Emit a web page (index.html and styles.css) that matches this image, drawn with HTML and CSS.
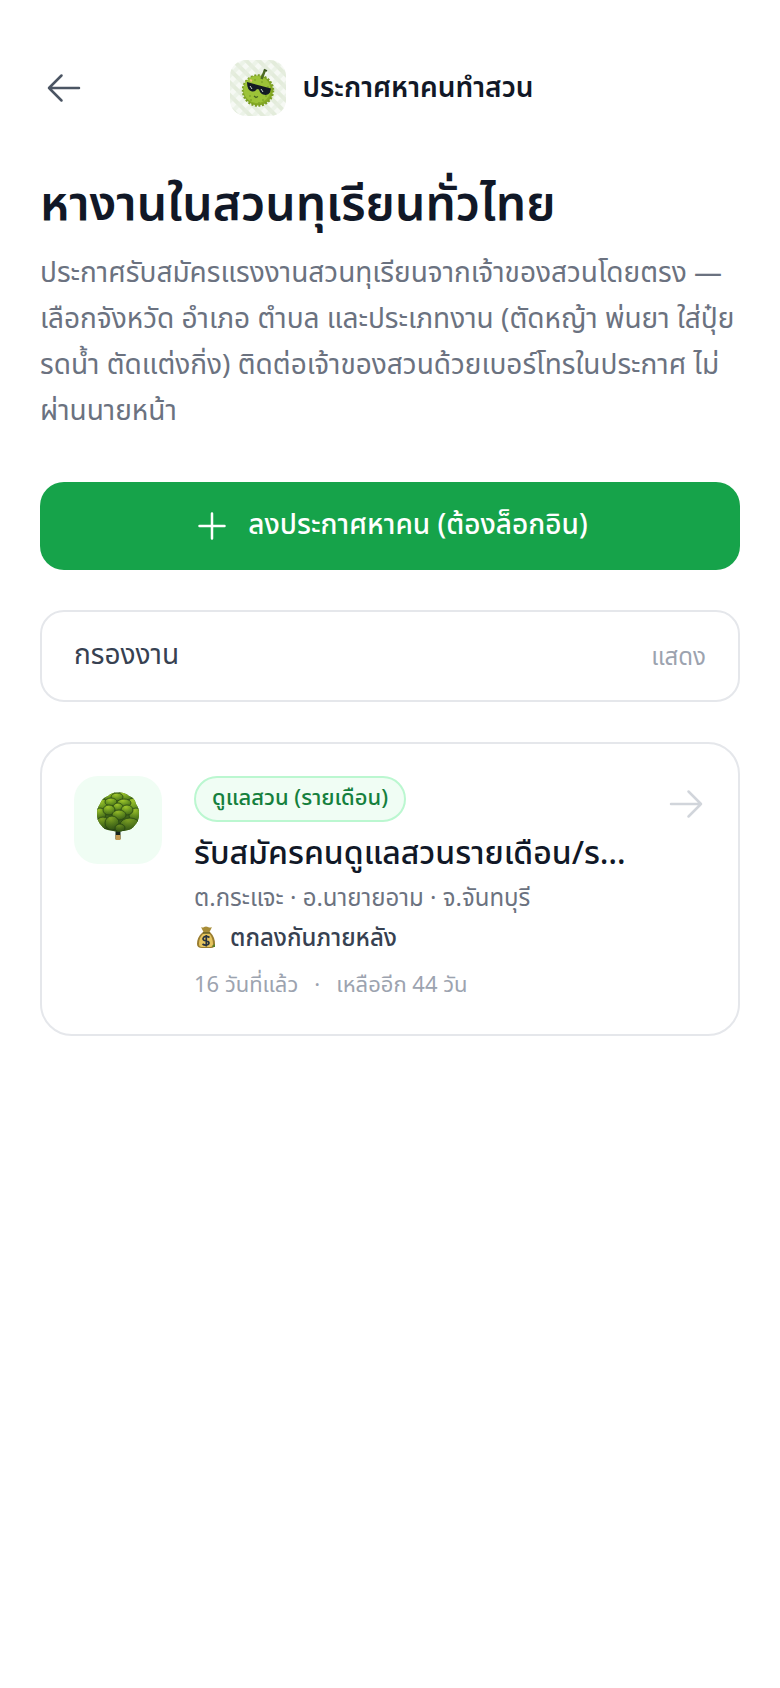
FILE: index.html
```html
<!DOCTYPE html>
<html lang="th">
<head>
<meta charset="utf-8">
<meta name="viewport" content="width=device-width, initial-scale=1">
<title>ประกาศหาคนทำสวน</title>
<link rel="stylesheet" href="styles.css">
</head>
<body>
<header class="topbar">
  <a class="back" href="#" aria-label="ย้อนกลับ">
    <svg class="icon" viewBox="0 0 24 24"><path d="M10.5 19.5 3 12m0 0 7.5-7.5M3 12h18"/></svg>
  </a>
  <div class="brand">
    <svg class="logo" viewBox="0 0 56 56" aria-hidden="true">
      <defs>
        <pattern id="plaid" width="9" height="9" patternUnits="userSpaceOnUse" patternTransform="rotate(-45)">
          <rect width="9" height="9" fill="#f6f9f4"/>
          <rect width="4" height="9" fill="#dce7d0" opacity=".7"/>
          <rect width="9" height="4" fill="#e6eedf" opacity=".6"/>
        </pattern>
      </defs>
      <rect width="56" height="56" fill="url(#plaid)"/>
      <circle cx="28" cy="30.500" r="15" fill="#86ab25" stroke="#7b9e24" stroke-width="2.500" stroke-dasharray="2 1.500"/>
      <circle cx="27" cy="29.500" r="13.500" fill="#9cc338"/>
      <g fill="#81a72b"><circle cx="20" cy="36" r="1"/><circle cx="33" cy="40" r="1"/><circle cx="36" cy="36" r="1"/><circle cx="21" cy="40" r="1"/><circle cx="29" cy="43" r="1"/><circle cx="32" cy="22" r="1"/><circle cx="38" cy="27" r="1"/><circle cx="25" cy="20" r="1"/></g>
      <path d="M31.500 19 35 10" stroke="#4d6b22" stroke-width="2.500"/>
      <path d="M34 9.500 37 11" stroke="#38521c" stroke-width="1.500"/>
      <path d="m17 22 24 6.500-1 4q-2 3.500-7 2-3-1-4-5l-2-.5q-2 3-5 2.500-5-1-5-9.500z" fill="#121a24"/>
      <path d="m20 26 2 3m9 0 2 3" stroke="#cbd2cf" stroke-width="1"/>
      <path d="m24 36 2 1.500 2-1" fill="none" stroke="#486620" stroke-width="1.300"/>
      <path d="m20 20 2 1" stroke="#edc477" stroke-width="2"/>
    </svg>
    <span class="brand-name">ประกาศหาคนทำสวน</span>
  </div>
  <span class="spacer"></span>
</header>
<main class="page">
  <h1 class="title">หางานในสวนทุเรียนทั่วไทย</h1>
  <p class="intro">ประกาศรับสมัครแรงงานสวนทุเรียนจากเจ้าของสวนโดยตรง — เลือกจังหวัด อำเภอ ตำบล และประเภทงาน (ตัดหญ้า พ่นยา ใส่ปุ๋ย รดน้ำ ตัดแต่งกิ่ง) ติดต่อเจ้าของสวนด้วยเบอร์โทรในประกาศ ไม่ผ่านนายหน้า</p>
  <button class="post" type="button">
    <svg class="icon" viewBox="0 0 24 24" aria-hidden="true"><path d="M12 4.5v15m7.5-7.5h-15"/></svg>
    <span class="label">ลงประกาศหาคน (ต้องล็อกอิน)</span>
  </button>
  <button class="filter" type="button" aria-expanded="false">
    <span class="label">กรองงาน</span>
    <span class="filter-toggle">แสดง</span>
  </button>
  <a class="job" href="#">
    <span class="tile">
      <svg class="tree" viewBox="0 0 48 52" aria-hidden="true">
        <defs>
          <radialGradient id="leaf" cx=".4" cy=".2" r=".8"><stop offset="0" stop-color="#a0c62b"/><stop offset=".5" stop-color="#719e21"/><stop offset="1" stop-color="#49721a"/></radialGradient>
          <linearGradient id="shade" x2="0" y2="1"><stop offset=".4" stop-color="#1f3a10" stop-opacity="0"/><stop offset="1" stop-color="#1f3a10" stop-opacity=".6"/></linearGradient>
          <clipPath id="crown"><path d="M24 1.500q7-.5 11 3.500 6 2 7 8 3 4 3 10 0 7-4 11-3 5-10 5.500-7 2-14 0-7-.5-10-5.500-4-4-4-11 0-6 3-10 2-6 8-8 4-4 10-3.500z"/></clipPath>
        </defs>
        <path d="M21.500 38h5v10h-5z" fill="#17251b"/>
        <path d="M21.500 44h5v5h-5z" fill="#c39a50"/>
        <g clip-path="url(#crown)">
          <rect width="48" height="42" fill="#48701b"/>
          <g fill="url(#leaf)" stroke="#2b4a14" stroke-width=".8">
            <ellipse cx="16" cy="5" rx="7" ry="5"/><ellipse cx="31" cy="5" rx="8" ry="5"/>
            <ellipse cx="23" cy="6" rx="6" ry="4"/><ellipse cx="8" cy="14" rx="7" ry="6"/>
            <ellipse cx="40" cy="14" rx="8" ry="7"/><ellipse cx="17" cy="11" rx="6" ry="4"/>
            <ellipse cx="30" cy="12" rx="7" ry="4"/><ellipse cx="24" cy="16" rx="5" ry="4"/>
            <ellipse cx="6" cy="23" rx="6" ry="6"/><ellipse cx="42" cy="24" rx="7" ry="7"/>
            <ellipse cx="15" cy="19" rx="6" ry="5"/><ellipse cx="33" cy="19" rx="6" ry="5"/>
            <ellipse cx="25" cy="24" rx="7" ry="5"/><ellipse cx="9" cy="32" rx="7" ry="6"/>
            <ellipse cx="18" cy="32" rx="7" ry="7"/><ellipse cx="36" cy="34" rx="10" ry="7"/>
            <ellipse cx="26" cy="37" rx="5" ry="4"/>
          </g>
          <path d="M0 0h48v42H0z" fill="url(#shade)"/>
        </g>
      </svg>
    </span>
    <span class="details">
      <span class="badge">ดูแลสวน (รายเดือน)</span>
      <strong class="job-title">รับสมัครคนดูแลสวนรายเดือน/ร…</strong>
      <span class="place">ต.กระแจะ · อ.นายายอาม · จ.จันทบุรี</span>
      <span class="pay">
        <svg class="bag" viewBox="0 0 24 24" aria-hidden="true">
          <path d="M7 2q2 1 3 0 2-1 4 0 2 1 4 0l-3 6h-5z" fill="#a88d37"/>
          <path d="M9 7h7q5 5 5 12 0 4-4 4H8q-5 0-5-4 0-7 6-12z" fill="#9a7d30"/>
          <path d="M10 8h5q4 5 4 11 0 3-3 3H8q-3 0-3-3 0-7 5-11z" fill="#e5c45e"/>
          <path d="M9 8h7" stroke="#686326" stroke-width="1.500"/>
          <path d="M15.500 12.500q-3-2-5.500-.5-2 2 0 3.200l4 1.300q2 1.500 0 3-3 1.500-5.500-.5M12.300 10v11.500" fill="none" stroke="#283340" stroke-width="1.700"/>
          <path d="m18 21 3-2v3h-2z" fill="#598128"/>
        </svg>
        <span>ตกลงกันภายหลัง</span>
      </span>
      <span class="meta"><span>16 วันที่แล้ว</span><span>·</span><span>เหลืออีก 44 วัน</span></span>
    </span>
    <svg class="icon go" viewBox="0 0 24 24" aria-hidden="true"><path d="M13.5 4.5 21 12m0 0-7.5 7.5M21 12H3"/></svg>
  </a>
</main>
</body>
</html>
```
FILE: styles.css
```css
* { box-sizing: border-box; }
body {
  margin: 0;
  background: #fff;
  color: #111827;
  font-family: "Noto Sans", "Noto Sans Thai", sans-serif;
  font-size: 28px;
  line-height: 40px;
}
a { color: inherit; text-decoration: none; }
button { font: inherit; cursor: pointer; }
.icon {
  display: block;
  flex: none;
  width: 40px;
  height: 40px;
  fill: none;
  stroke: currentColor;
  stroke-width: 1.5;
  stroke-linecap: round;
  stroke-linejoin: round;
}
.topbar {
  display: flex;
  align-items: center;
  justify-content: space-between;
  padding: 56px 40px 24px;
}
.back { padding: 12px 4px; color: #4b5563; }
.brand { display: flex; align-items: center; gap: 16px; }
.logo { display: block; width: 56px; height: 56px; border-radius: 16px; }
.brand-name { padding-bottom: 4px; font-weight: 600; }
.spacer { width: 64px; }
.page { padding: 28px 40px 40px; }
.title { margin: 0 0 16px; font-size: 48px; line-height: 60px; font-weight: 600; }
.intro { margin: 0 0 50px; color: #6b7280; line-height: 46px; }
.label { padding-bottom: 6px; line-height: 34px; }
.post {
  display: flex;
  align-items: center;
  justify-content: center;
  gap: 16px;
  width: 100%;
  padding: 24px 32px;
  border: 0;
  border-radius: 24px;
  background: #16a34a;
  color: #fff;
  font-weight: 500;
}
.filter {
  display: flex;
  align-items: center;
  justify-content: space-between;
  width: 100%;
  margin: 40px 0;
  padding: 24px 32px;
  border: 2px solid #e5e7eb;
  border-radius: 24px;
  background: #fff;
  color: #374151;
}
.filter-toggle { color: #9ca3af; font-size: 24px; }
.job {
  display: flex;
  align-items: flex-start;
  gap: 32px;
  padding: 32px;
  border: 2px solid #e5e7eb;
  border-radius: 32px;
}
.tile {
  display: flex;
  flex: none;
  justify-content: center;
  width: 88px;
  height: 88px;
  padding-top: 15px;
  border-radius: 24px;
  background: #f0fdf4;
}
.tree { width: 48px; height: 52px; }
.details { display: flex; flex: 1; flex-direction: column; align-items: flex-start; min-width: 0; }
.badge {
  padding: 2px 16px 8px;
  border: 2px solid #bbf7d0;
  border-radius: 24px;
  background: #f0fdf4;
  color: #15803d;
  font-size: 22px;
  line-height: 32px;
  font-weight: 500;
}
.job-title {
  max-width: 100%;
  margin-top: 6px;
  overflow: hidden;
  font-size: 32px;
  line-height: 48px;
  font-weight: 500;
  text-overflow: ellipsis;
  white-space: nowrap;
}
.place { margin-top: 5px; color: #6b7280; font-size: 24px; line-height: 32px; }
.pay {
  display: flex;
  align-items: center;
  gap: 12px;
  margin-top: 8px;
  color: #374151;
  font-size: 24px;
  line-height: 32px;
  font-weight: 500;
}
.bag { width: 24px; height: 24px; }
.meta { display: flex; gap: 16px; margin-top: 12px; padding-bottom: 1px; color: #9ca3af; font-size: 22px; line-height: 36px; }
.go { margin-top: 8px; color: #d1d5db; }
```
